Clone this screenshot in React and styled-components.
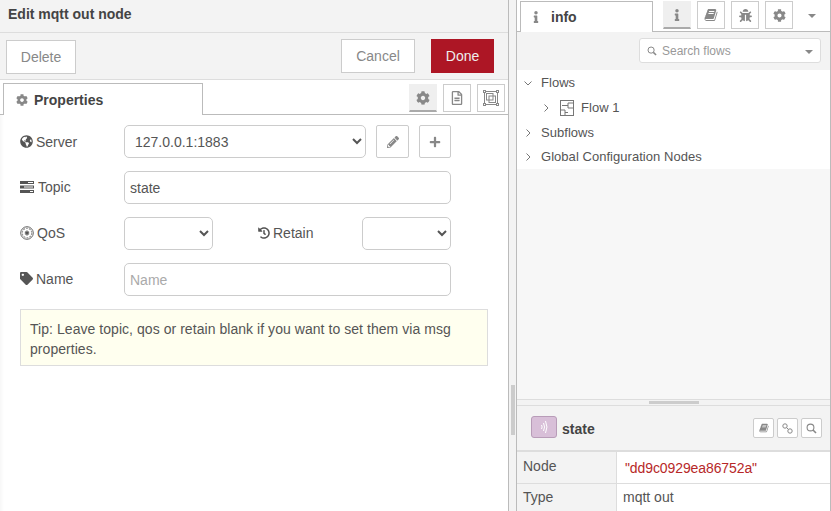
import React from 'react';
import styled, { createGlobalStyle } from 'styled-components';
import {
  FaBug, FaCog, FaGlobeAmericas, FaHistory, FaInfo,
  FaPencilAlt, FaPlus, FaRegFileAlt, FaTag,
} from 'react-icons/fa';

const GlobalStyle = createGlobalStyle`
  html, body {
    margin: 0;
    height: 100%;
    overflow: hidden;
    background: #fff;
  }
  body, input, select, button {
    font-family: "Liberation Sans", Arial, sans-serif;
    font-size: 14px;
    color: #555;
  }
  * { box-sizing: border-box; }
`;

const Page = styled.div`
  display: flex;
  width: 831px;
  height: 511px;
  overflow: hidden;
`;

/* edit tray */
const Tray = styled.div`
  width: 509px;
  flex: none;
  display: flex;
  flex-direction: column;
  border-right: 1px solid #bbb;
`;

const TrayTitle = styled.div`
  height: 33px;
  padding: 0 8px 4px;
  display: flex;
  align-items: center;
  background: #f3f3f3;
  border-bottom: 1px solid #ddd;
  font-size: 14px;
  font-weight: 700;
  color: #444;
`;

const TrayToolbar = styled.div`
  height: 47px;
  padding: 6px 14px 0 6px;
  display: flex;
  align-items: flex-start;
  background: #f3f3f3;
  border-bottom: 1px solid #ddd;
`;

const ActionButton = styled.button`
  height: 34px;
  width: ${p => p.$width}px;
  margin-top: ${p => p.$top || 0}px;
  margin-left: ${p => p.$left || 0}px;
  padding: 0;
  font-size: 14px;
  color: ${p => (p.$primary ? '#eee' : '#888')};
  background: ${p => (p.$primary ? '#ad1625' : '#fff')};
  border: 1px solid ${p => (p.$primary ? '#ad1625' : '#ccc')};
`;

const Spacer = styled.div`
  flex: 1;
`;

const TabBar = styled.div`
  height: 35px;
  padding: 3px 3px 0;
  display: flex;
  align-items: flex-start;
  border-bottom: 1px solid #bbb;
`;

const Tab = styled.div`
  width: ${p => p.$width}px;
  height: 32px;
  display: flex;
  align-items: center;
  background: #fff;
  border: 1px solid #bbb;
  border-bottom: none;
  font-weight: 700;
  color: #444;
`;

const PropertiesTab = styled(Tab)`
  padding: 0 0 0 12px;
  gap: 6px;
  svg { color: #888; font-size: 12px; }
`;

const IconToggle = styled.div`
  width: 28px;
  height: 28px;
  margin-top: 1px;
  margin-left: ${p => p.$gap || 6}px;
  display: flex;
  align-items: center;
  justify-content: center;
  color: #888;
  font-size: ${p => p.$size || 14}px;
  background: ${p => (p.$active ? '#efefef' : '#fff')};
  border: 1px solid ${p => (p.$active ? '#efefef' : '#ccc')};
  border-bottom: ${p => (p.$active ? '2px solid #aaa' : '1px solid #ccc')};
`;

const Form = styled.div`
  flex: 1;
  padding: 10px 20px 0;
  display: flex;
  flex-direction: column;
  background: linear-gradient(to right, #f7f7f7, #fff 4px);
`;

const FormRow = styled.div`
  display: flex;
  align-items: flex-start;
  height: 33px;
  margin-bottom: 13px;
`;

const Label = styled.label`
  width: ${p => p.$width || 104}px;
  flex: none;
  height: 33px;
  margin-top: ${p => p.$shift || 0}px;
  padding-left: ${p => p.$inset || 0}px;
  display: flex;
  align-items: center;
  gap: ${p => p.$gap || 3}px;
  font-size: 14px;
  color: #555;
  svg { color: #555; flex: none; }
`;

const Select = styled.select`
  width: ${p => p.$width}px;
  height: 33px;
  padding: 0 6px;
  font-size: 14px;
  color: #555;
  background: #fff;
  border: 1px solid #ccc;
  border-radius: 5px;
`;

const Input = styled.input`
  width: 327px;
  height: 33px;
  padding: 0 5px;
  font-size: 14px;
  color: #555;
  background: #fff;
  border: 1px solid #ccc;
  border-radius: 5px;
  outline: none;
  &::placeholder { color: #aaa; }
`;

const SquareButton = styled.div`
  width: ${p => p.$width || 33}px;
  height: 33px;
  margin-left: ${p => p.$left}px;
  display: flex;
  align-items: center;
  justify-content: center;
  color: #888;
  font-size: 12px;
  background: #fff;
  border: 1px solid #ccc;
  border-radius: 2px;
`;

const Tip = styled.div`
  width: 468px;
  height: 57px;
  padding: 9px 9px;
  font-size: 14px;
  line-height: 20px;
  letter-spacing: 0.05px;
  color: #555;
  background: #ffffef;
  border: 1px solid #ddd;
`;

/* gap between the two panels */
const Divider = styled.div`
  width: 7px;
  flex: none;
  padding: 385px 0 0 2px;
  background: #f3f3f3;
`;

const Grip = styled.div`
  width: 4px;
  height: 50px;
  background: #ccc;
`;

/* sidebar */
const Sidebar = styled.div`
  flex: 1;
  display: flex;
  flex-direction: column;
  border-left: 1px solid #bbb;
  border-right: 1px solid #bbb;
  background: #f7f7f7;
`;

const SideTabs = styled.div`
  height: 32px;
  padding: 1px 0 0 3px;
  display: flex;
  align-items: flex-start;
  background: #fff;
  border-bottom: 1px solid #bbb;
`;

const InfoTab = styled(Tab)`
  height: 31px;
  padding-left: 9px;
  gap: 9px;
  svg { color: #888; font-size: 12px; }
`;

const SideToggle = styled(IconToggle)`
  margin-top: 0;
`;

const Caret = styled.div`
  width: 0;
  height: 0;
  margin: ${p => p.$margin};
  border-left: 4px solid transparent;
  border-right: 4px solid transparent;
  border-top: 4px solid #888;
`;

const SearchBar = styled.div`
  height: 38px;
  padding: 6px 9px 0 0;
  display: flex;
  justify-content: flex-end;
  background: #f3f3f3;
`;

const SearchBox = styled.div`
  width: 182px;
  height: 25px;
  padding: 0 8px 0 7px;
  display: flex;
  align-items: center;
  gap: 5px;
  font-size: 12px;
  color: #999;
  background: #fff;
  border: 1px solid #ddd;
  border-radius: 3px;
`;

const Tree = styled.div`
  height: 99px;
  display: flex;
  flex-direction: column;
  background: #fff;
`;

const TreeRow = styled.div`
  height: ${p => p.$height || 25}px;
  flex: none;
  display: flex;
  align-items: center;
  padding-left: ${p => p.$indent}px;
  font-size: 13px;
  letter-spacing: 0.04px;
  color: #555;
`;

const Chevron = styled.svg`
  width: 8px;
  height: 8px;
  flex: none;
  margin-right: ${p => p.$right || 10}px;
  fill: none;
  stroke: #777;
  stroke-width: 1;
`;

const FlowIcon = styled.svg`
  width: 16px;
  height: 18px;
  flex: none;
  margin-right: 6px;
  fill: none;
  stroke: #777;
  stroke-width: 1;
`;

const Filler = styled.div`
  flex: 1;
`;

const ResizeBar = styled.div`
  height: 7px;
  padding-top: 1px;
  display: flex;
  justify-content: center;
  background: #f3f3f3;
  border-top: 1px solid #ddd;
  border-bottom: 1px solid #ddd;
`;

const ResizeGrip = styled.div`
  width: 50px;
  height: 3px;
  background: #ccc;
`;

const NodeHeader = styled.div`
  height: 46px;
  padding: 0 8px 2px 14px;
  display: flex;
  align-items: center;
  background: #f3f3f3;
  border-bottom: 2px solid #ddd;
`;

const NodeIcon = styled.div`
  width: 26px;
  height: 22px;
  margin-right: 5px;
  display: flex;
  align-items: center;
  justify-content: center;
  background: #d8bfd8;
  border: 1px solid #b89cb8;
  border-radius: 3px;
`;

const NodeName = styled.div`
  margin-top: 4px;
  font-weight: 700;
  color: #444;
`;

const MiniButton = styled.div`
  width: 21px;
  height: 20px;
  margin: 2px 0 0 3px;
  display: flex;
  align-items: center;
  justify-content: center;
  background: #fff;
  border: 1px solid #ccc;
  border-radius: 2px;
`;

const InfoRow = styled.div`
  height: ${p => p.$height}px;
  display: grid;
  grid-template-columns: 100px 1fr;
  background: #fff;
  border-bottom: ${p => (p.$last ? 'none' : '1px solid #ddd')};
`;

const InfoKey = styled.div`
  padding: ${p => p.$top}px 0 0 6px;
  font-size: 14px;
  color: #555;
  background: #f3f3f3;
  border-right: 1px solid #ddd;
`;

const InfoValue = styled.div`
  padding: ${p => p.$top}px 0 0 ${p => p.$left}px;
  font-size: 14px;
  letter-spacing: ${p => p.$tracking || 0}px;
  color: ${p => p.$color || '#555'};
`;

function ChevronRight({ right }) {
  return (
    <Chevron viewBox="0 0 8 8" $right={right}>
      <path d="M2.5 0.5 L6 4 L2.5 7.5" />
    </Chevron>
  );
}

function ChevronDown({ right }) {
  return (
    <Chevron viewBox="0 0 8 8" $right={right}>
      <path d="M0.5 2.5 L4 6 L7.5 2.5" />
    </Chevron>
  );
}

function TopicIcon() {
  return (
    <svg width="14" height="12" viewBox="0 0 14 12" fill="#555">
      <rect x="0" y="0" width="14" height="3" />
      <rect x="0" y="4.5" width="14" height="3" />
      <rect x="0" y="9" width="14" height="3" />
      <rect x="8" y="1" width="5" height="1" fill="#fff" />
      <rect x="4" y="5.5" width="9" height="1" fill="#fff" />
      <rect x="10" y="10" width="3" height="1" fill="#fff" />
    </svg>
  );
}

function QosIcon() {
  return (
    <svg width="14" height="14" viewBox="0 0 14 14" fill="none" stroke="#555">
      <circle cx="7" cy="7" r="6.3" strokeWidth="0.9" />
      <circle cx="7" cy="7" r="4.8" strokeWidth="1.2" strokeDasharray="2 1" stroke="#999" />
      <path d="M7 4.6 V9.4 M4.9 5.8 L9.1 8.2 M4.9 8.2 L9.1 5.8" strokeWidth="1.3" />
    </svg>
  );
}

function FrameIcon() {
  return (
    <svg width="16" height="16" viewBox="0 0 16 16" fill="none" stroke="#888">
      <rect x="1.5" y="1.5" width="13" height="13" />
      <rect x="0.5" y="0.5" width="2" height="2" fill="#fff" />
      <rect x="13.5" y="0.5" width="2" height="2" fill="#fff" />
      <rect x="0.5" y="13.5" width="2" height="2" fill="#fff" />
      <rect x="13.5" y="13.5" width="2" height="2" fill="#fff" />
      <rect x="3.5" y="3.5" width="6.5" height="6.5" />
      <rect x="6" y="6" width="6.5" height="6.5" />
    </svg>
  );
}

function SignalIcon() {
  return (
    <svg width="10" height="16" viewBox="0 0 10 16" fill="none" stroke="#fff" strokeWidth="1">
      <path d="M2.5 6 Q3.8 8 2.5 10" />
      <path d="M4.5 4 Q6.6 8 4.5 12" />
      <path d="M6.5 2 Q9.4 8 6.5 14" />
    </svg>
  );
}

// slanted book, the one font awesome 4 has
function BookIcon({ size, color = '#888' }) {
  return (
    <svg width={size} height={size} viewBox="0 0 1664 1792" fill={color}>
      <path d="M1639 478q40 57 18 129l-275 906q-19 64-76.5 107.5t-122.5 43.5h-923q-77 0-148.5-53.5t-99.5-131.5q-24-67-2-127 0-4 3-27t4-37q1-8-3-21.5t-3-19.5q2-11 8-21t16.5-23.5 16.5-23.5q23-38 45-91.5t30-91.5q3-10 .5-30t-.5-28q3-11 17-28t17-23q21-36 42-92t25-90q1-9-2.5-32t.5-28q4-13 22-30.5t22-22.5q19-26 42.5-84.5t27.5-96.5q1-8-3-25.5t-2-26.5q2-8 9-18t18-23 17-21q8-12 16.5-30.5t15-35 16-36 19.5-32 26.5-23.5 36-11.5 47.5 5.5l-1 3q38-9 51-9h761q74 0 114 56t18 130l-274 906q-36 119-71.5 153.5t-128.5 34.5h-869q-27 0-38 15-11 16-1 43 24 70 144 70h923q29 0 56-15.5t35-41.5l300-987q7-22 5-57 38 15 59 43zm-1064 2q-4 13 2 22.5t20 9.5h608q13 0 25.5-9.5t16.5-22.5l21-64q4-13-2-22.5t-20-9.5h-608q-13 0-25.5 9.5t-16.5 22.5zm-83 256q-4 13 2 22.5t20 9.5h608q13 0 25.5-9.5t16.5-22.5l21-64q4-13-2-22.5t-20-9.5h-608q-13 0-25.5 9.5t-16.5 22.5z" />
    </svg>
  );
}

function LinkIcon() {
  return (
    <svg width="11" height="11" viewBox="0 0 11 11" fill="none" stroke="#888" strokeWidth="1">
      <circle cx="3" cy="3" r="2.2" />
      <circle cx="8" cy="8" r="2.2" />
      <path d="M4.5 4.5 L6.5 6.5" />
    </svg>
  );
}

function SearchIcon({ size = 11 }) {
  return (
    <svg width={size} height={size} viewBox="0 0 11 11" fill="none" stroke="#888">
      <circle cx="4.5" cy="4.5" r="3.4" strokeWidth="1.1" />
      <path d="M7 7 L10 10" strokeWidth="1.6" />
    </svg>
  );
}

export default function App() {
  return (
    <Page>
      <GlobalStyle />
      <Tray>
        <TrayTitle>Edit mqtt out node</TrayTitle>
        <TrayToolbar>
          <ActionButton $width={70} $top={1}>Delete</ActionButton>
          <Spacer />
          <ActionButton $width={74}>Cancel</ActionButton>
          <ActionButton $width={63} $left={16} $primary>Done</ActionButton>
        </TrayToolbar>
        <TabBar>
          <PropertiesTab $width={200}>
            <FaCog />
            Properties
          </PropertiesTab>
          <Spacer />
          <IconToggle $active><FaCog /></IconToggle>
          <IconToggle><FaRegFileAlt /></IconToggle>
          <IconToggle><FrameIcon /></IconToggle>
        </TabBar>
        <Form>
          <FormRow>
            <Label><FaGlobeAmericas size={13} /> Server</Label>
            <Select $width={242} defaultValue="broker">
              <option value="broker">127.0.0.1:1883</option>
            </Select>
            <SquareButton $left={10}><FaPencilAlt /></SquareButton>
            <SquareButton $left={10} $width={32}><FaPlus /></SquareButton>
          </FormRow>
          <FormRow>
            <Label $gap={4} $shift={-1}><TopicIcon /> Topic</Label>
            <Input defaultValue="state" />
          </FormRow>
          <FormRow>
            <Label $gap={3} $shift={-1}><QosIcon /> QoS</Label>
            <Select $width={89}><option /></Select>
            <Label $width={149} $gap={3} $shift={-1} $inset={45}>
              <FaHistory size={12} /> Retain
            </Label>
            <Select $width={89}><option /></Select>
          </FormRow>
          <FormRow>
            <Label $shift={-1}><FaTag size={13} /> Name</Label>
            <Input placeholder="Name" />
          </FormRow>
          <Tip>Tip: Leave topic, qos or retain blank if you want to set them via msg properties.</Tip>
        </Form>
      </Tray>
      <Divider><Grip /></Divider>
      <Sidebar>
        <SideTabs>
          <InfoTab $width={133}>
            <FaInfo />
            info
          </InfoTab>
          <SideToggle $gap={10} $active><FaInfo size={12} /></SideToggle>
          <SideToggle><BookIcon size={14} /></SideToggle>
          <SideToggle><FaBug size={13} /></SideToggle>
          <SideToggle><FaCog size={13} /></SideToggle>
          <Caret $margin="13px 0 0 15px" />
        </SideTabs>
        <SearchBar>
          <SearchBox>
            <SearchIcon size={10} />
            Search flows
            <Spacer />
            <Caret $margin="2px -1px 0 0" />
          </SearchBox>
        </SearchBar>
        <Tree>
          <TreeRow $indent={7}><ChevronDown right={9} />Flows</TreeRow>
          <TreeRow $indent={25}>
            <ChevronRight right={9} />
            <FlowIcon viewBox="0 0 16 18">
              <rect x="1.5" y="1.5" width="13" height="15" />
              <path d="M9 4 H14.5 M9 4 V9 H14.5 M1.5 11 H6 V16.5 M6 13.5 H9 M3 6.5 H9" />
            </FlowIcon>
            Flow 1
          </TreeRow>
          <TreeRow $indent={7}><ChevronRight right={9} />Subflows</TreeRow>
          <TreeRow $indent={7} $height={23}><ChevronRight right={9} />Global Configuration Nodes</TreeRow>
        </Tree>
        <Filler />
        <ResizeBar><ResizeGrip /></ResizeBar>
        <NodeHeader>
          <NodeIcon><SignalIcon /></NodeIcon>
          <NodeName>state</NodeName>
          <Spacer />
          <MiniButton><BookIcon size={10} /></MiniButton>
          <MiniButton><LinkIcon /></MiniButton>
          <MiniButton><SearchIcon /></MiniButton>
        </NodeHeader>
        <InfoRow $height={32}>
          <InfoKey $top={6}>Node</InfoKey>
          <InfoValue $top={8} $left={8} $color="#b72828" $tracking={-0.1}>"dd9c0929ea86752a"</InfoValue>
        </InfoRow>
        <InfoRow $height={27} $last>
          <InfoKey $top={5}>Type</InfoKey>
          <InfoValue $top={5} $left={6}>mqtt out</InfoValue>
        </InfoRow>
      </Sidebar>
    </Page>
  );
}
